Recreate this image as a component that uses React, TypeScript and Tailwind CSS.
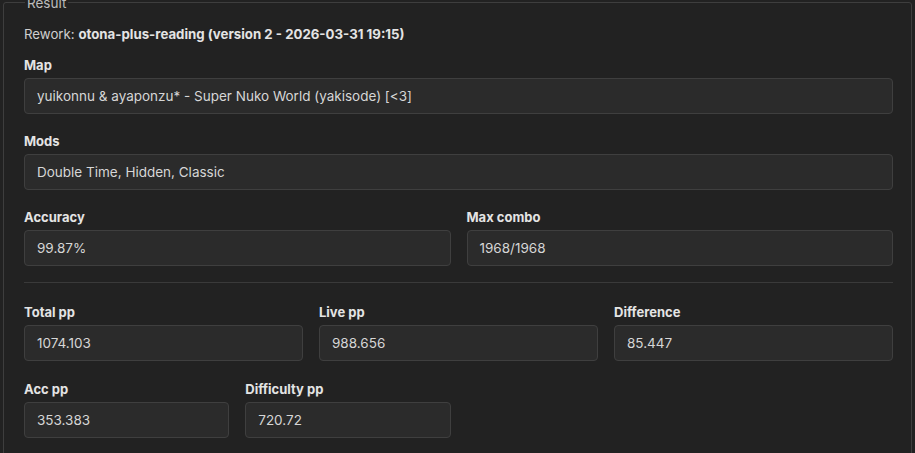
import React from 'react';

const font = { fontFamily: 'Inter, "Noto Sans", sans-serif' };

interface FieldProps {
  label: string;
  value: string;
}

const Field: React.FC<FieldProps> = ({ label, value }) => {
  return (
    <div className="flex flex-col min-w-0">
      <label className="text-[13px] leading-[18px] font-bold text-[#e4e4e4] mb-1">{label}</label>
      <div className="h-[36px] flex items-center px-3 bg-[#2b2b2b] border border-[#3f3f3f] rounded-[4px] text-[13.5px] text-[#d6d6d6] whitespace-nowrap overflow-hidden">
        {value}
      </div>
    </div>
  );
};

export default function App() {
  return (
    <div className="w-[915px] h-[453px] overflow-hidden bg-[#222222]" style={font}>
      <fieldset className="mx-[3px] -mt-[6px] border border-[#3e3e3e] rounded-[3px] pl-5 pr-[18px] pt-[14px] pb-6">
        <legend className="ml-[1px] px-[2px] pt-[2px] text-[13.5px] leading-[14px] text-[#bdbdbd]">Result</legend>

        <p className="text-[13.25px] leading-5 text-[#cfcfcf]">
          Rework: <span className="font-bold text-[#e4e4e4]">otona-plus-reading (version 2 - 2026-03-31 19:15)</span>
        </p>

        <div className="mt-3 flex flex-col gap-[18px]">
          <Field label="Map" value="yuikonnu & ayaponzu* - Super Nuko World (yakisode) [<3]" />
          <Field label="Mods" value="Double Time, Hidden, Classic" />
          <div className="grid grid-cols-2 gap-4">
            <Field label="Accuracy" value="99.87%" />
            <Field label="Max combo" value="1968/1968" />
          </div>
        </div>

        <hr className="mt-4 mb-5 border-t border-[#3a3a3a]" />

        <div className="flex flex-col gap-[19px]">
          <div className="grid grid-cols-3 gap-4">
            <Field label="Total pp" value="1074.103" />
            <Field label="Live pp" value="988.656" />
            <Field label="Difference" value="85.447" />
          </div>
          <div className="grid grid-cols-4 gap-4">
            <Field label="Acc pp" value="353.383" />
            <Field label="Difficulty pp" value="720.72" />
          </div>
        </div>
      </fieldset>
    </div>
  );
}
